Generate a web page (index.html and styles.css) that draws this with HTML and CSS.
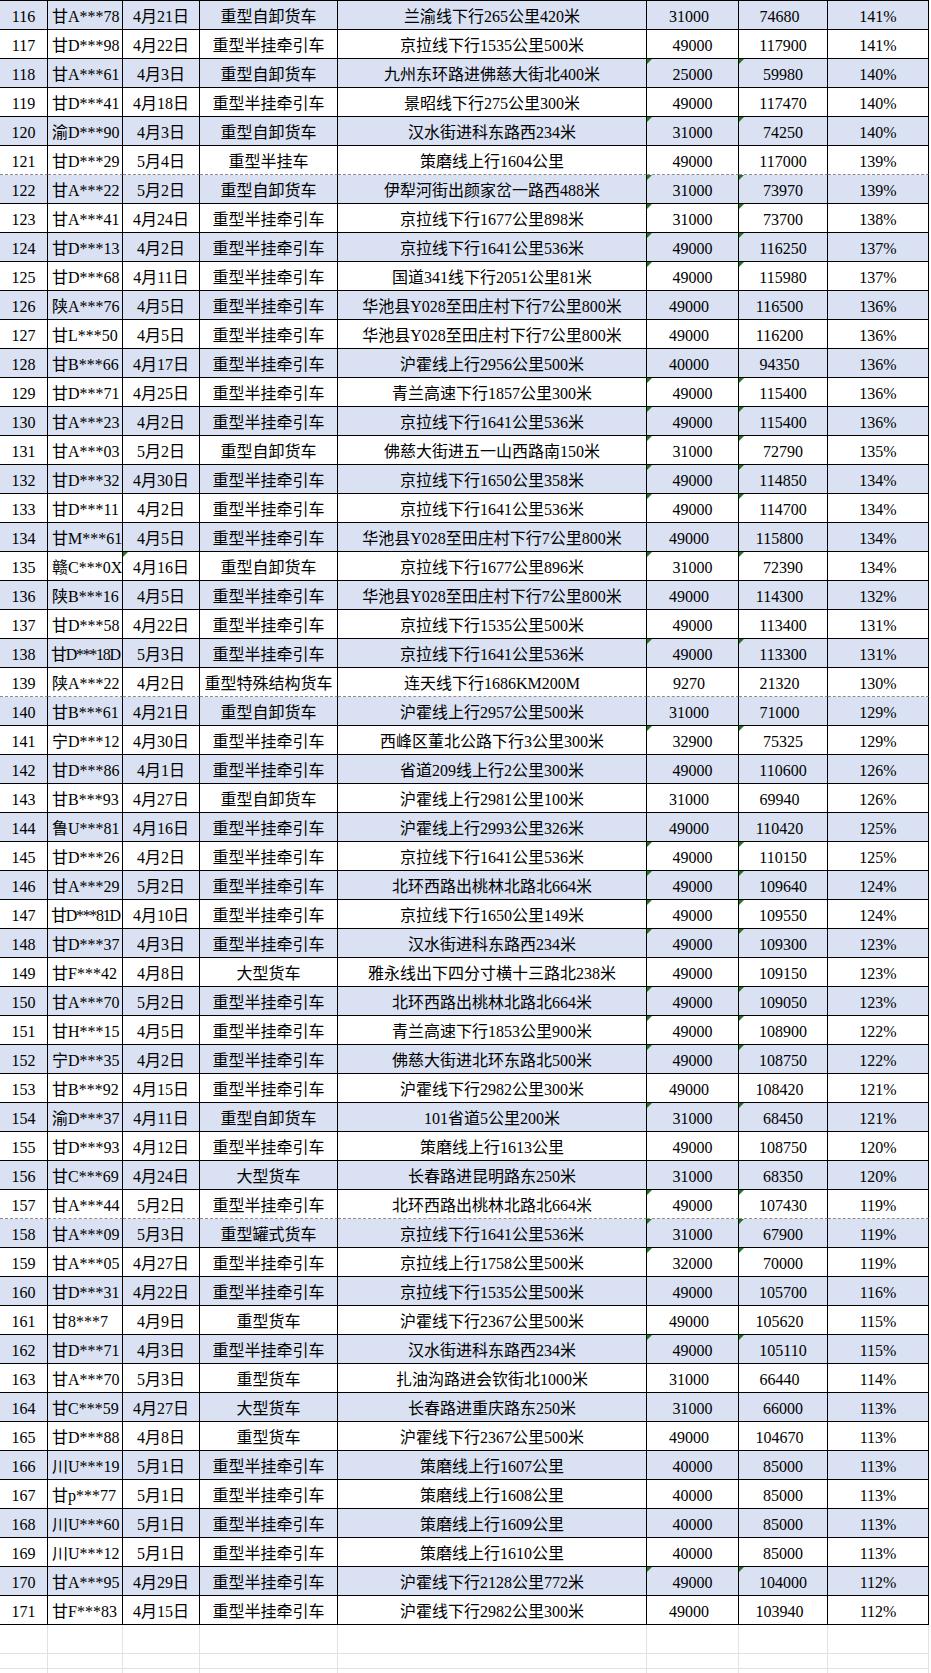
FILE: index.html
```html
<!DOCTYPE html>
<html lang="zh-CN">
<head>
<meta charset="utf-8">
<title>超限车辆明细</title>
<link rel="stylesheet" href="styles.css">
</head>
<body>
<div class="sheet">
  <div class="row k"><div class="c n">116</div><div class="c p">甘A***78</div><div class="c d">4月21日</div><div class="c t">重型自卸货车</div><div class="c l">兰渝线下行265公里420米</div><div class="c v">31000</div><div class="c w">74680</div><div class="c r">141%</div></div>
  <div class="row"><div class="c n">117</div><div class="c p">甘D***98</div><div class="c d">4月22日</div><div class="c t">重型半挂牵引车</div><div class="c l">京拉线下行1535公里500米</div><div class="c v">49000</div><div class="c w">117900</div><div class="c r">141%</div></div>
  <div class="row g"><div class="c n">118</div><div class="c p">甘A***61</div><div class="c d">4月3日</div><div class="c t">重型自卸货车</div><div class="c l">九州东环路进佛慈大街北400米</div><div class="c v">25000</div><div class="c w">59980</div><div class="c r">140%</div></div>
  <div class="row"><div class="c n">119</div><div class="c p">甘D***41</div><div class="c d">4月18日</div><div class="c t">重型半挂牵引车</div><div class="c l">景昭线下行275公里300米</div><div class="c v">49000</div><div class="c w">117470</div><div class="c r">140%</div></div>
  <div class="row g"><div class="c n">120</div><div class="c p">渝D***90</div><div class="c d">4月3日</div><div class="c t">重型自卸货车</div><div class="c l">汉水街进科东路西234米</div><div class="c v">31000</div><div class="c w">74250</div><div class="c r">140%</div></div>
  <div class="row pb"><div class="c n">121</div><div class="c p">甘D***29</div><div class="c d">5月4日</div><div class="c t">重型半挂车</div><div class="c l">策磨线上行1604公里</div><div class="c v">49000</div><div class="c w">117000</div><div class="c r">139%</div></div>
  <div class="row g"><div class="c n">122</div><div class="c p">甘A***22</div><div class="c d">5月2日</div><div class="c t">重型自卸货车</div><div class="c l">伊犁河街出颜家岔一路西488米</div><div class="c v">31000</div><div class="c w">73970</div><div class="c r">139%</div></div>
  <div class="row g"><div class="c n">123</div><div class="c p">甘A***41</div><div class="c d">4月24日</div><div class="c t">重型半挂牵引车</div><div class="c l">京拉线下行1677公里898米</div><div class="c v">31000</div><div class="c w">73700</div><div class="c r">138%</div></div>
  <div class="row g"><div class="c n">124</div><div class="c p">甘D***13</div><div class="c d">4月2日</div><div class="c t">重型半挂牵引车</div><div class="c l">京拉线下行1641公里536米</div><div class="c v">49000</div><div class="c w">116250</div><div class="c r">137%</div></div>
  <div class="row g"><div class="c n">125</div><div class="c p">甘D***68</div><div class="c d">4月11日</div><div class="c t">重型半挂牵引车</div><div class="c l">国道341线下行2051公里81米</div><div class="c v">49000</div><div class="c w">115980</div><div class="c r">137%</div></div>
  <div class="row k"><div class="c n">126</div><div class="c p">陕A***76</div><div class="c d">4月5日</div><div class="c t">重型半挂牵引车</div><div class="c l">华池县Y028至田庄村下行7公里800米</div><div class="c v">49000</div><div class="c w">116500</div><div class="c r">136%</div></div>
  <div class="row k"><div class="c n">127</div><div class="c p">甘L***50</div><div class="c d">4月5日</div><div class="c t">重型半挂牵引车</div><div class="c l">华池县Y028至田庄村下行7公里800米</div><div class="c v">49000</div><div class="c w">116200</div><div class="c r">136%</div></div>
  <div class="row k"><div class="c n">128</div><div class="c p">甘B***66</div><div class="c d">4月17日</div><div class="c t">重型半挂牵引车</div><div class="c l">沪霍线上行2956公里500米</div><div class="c v">40000</div><div class="c w">94350</div><div class="c r">136%</div></div>
  <div class="row g"><div class="c n">129</div><div class="c p">甘D***71</div><div class="c d">4月25日</div><div class="c t">重型半挂牵引车</div><div class="c l">青兰高速下行1857公里300米</div><div class="c v">49000</div><div class="c w">115400</div><div class="c r">136%</div></div>
  <div class="row g"><div class="c n">130</div><div class="c p">甘A***23</div><div class="c d">4月2日</div><div class="c t">重型半挂牵引车</div><div class="c l">京拉线下行1641公里536米</div><div class="c v">49000</div><div class="c w">115400</div><div class="c r">136%</div></div>
  <div class="row g"><div class="c n">131</div><div class="c p">甘A***03</div><div class="c d">5月2日</div><div class="c t">重型自卸货车</div><div class="c l">佛慈大街进五一山西路南150米</div><div class="c v">31000</div><div class="c w">72790</div><div class="c r">135%</div></div>
  <div class="row g"><div class="c n">132</div><div class="c p">甘D***32</div><div class="c d">4月30日</div><div class="c t">重型半挂牵引车</div><div class="c l">京拉线下行1650公里358米</div><div class="c v">49000</div><div class="c w">114850</div><div class="c r">134%</div></div>
  <div class="row g"><div class="c n">133</div><div class="c p">甘D***11</div><div class="c d">4月2日</div><div class="c t">重型半挂牵引车</div><div class="c l">京拉线下行1641公里536米</div><div class="c v">49000</div><div class="c w">114700</div><div class="c r">134%</div></div>
  <div class="row k"><div class="c n">134</div><div class="c p">甘M***61</div><div class="c d">4月5日</div><div class="c t">重型半挂牵引车</div><div class="c l">华池县Y028至田庄村下行7公里800米</div><div class="c v">49000</div><div class="c w">115800</div><div class="c r">134%</div></div>
  <div class="row g"><div class="c n">135</div><div class="c p">赣C***0X</div><div class="c d gd">4月16日</div><div class="c t">重型自卸货车</div><div class="c l">京拉线下行1677公里896米</div><div class="c v">31000</div><div class="c w">72390</div><div class="c r">134%</div></div>
  <div class="row k"><div class="c n">136</div><div class="c p">陕B***16</div><div class="c d">4月5日</div><div class="c t">重型半挂牵引车</div><div class="c l">华池县Y028至田庄村下行7公里800米</div><div class="c v">49000</div><div class="c w">114300</div><div class="c r">132%</div></div>
  <div class="row"><div class="c n">137</div><div class="c p">甘D***58</div><div class="c d">4月22日</div><div class="c t">重型半挂牵引车</div><div class="c l">京拉线下行1535公里500米</div><div class="c v">49000</div><div class="c w">113400</div><div class="c r">131%</div></div>
  <div class="row g"><div class="c n">138</div><div class="c p tight">甘D***18D</div><div class="c d">5月3日</div><div class="c t">重型半挂牵引车</div><div class="c l">京拉线下行1641公里536米</div><div class="c v">49000</div><div class="c w">113300</div><div class="c r">131%</div></div>
  <div class="row k pb"><div class="c n">139</div><div class="c p">陕A***22</div><div class="c d">4月2日</div><div class="c t">重型特殊结构货车</div><div class="c l">连天线下行1686KM200M</div><div class="c v">9270</div><div class="c w">21320</div><div class="c r">130%</div></div>
  <div class="row k"><div class="c n">140</div><div class="c p">甘B***61</div><div class="c d">4月21日</div><div class="c t">重型自卸货车</div><div class="c l">沪霍线上行2957公里500米</div><div class="c v">31000</div><div class="c w">71000</div><div class="c r">129%</div></div>
  <div class="row g"><div class="c n">141</div><div class="c p">宁D***12</div><div class="c d">4月30日</div><div class="c t">重型半挂牵引车</div><div class="c l">西峰区董北公路下行3公里300米</div><div class="c v">32900</div><div class="c w">75325</div><div class="c r">129%</div></div>
  <div class="row"><div class="c n">142</div><div class="c p">甘D***86</div><div class="c d">4月1日</div><div class="c t">重型半挂牵引车</div><div class="c l">省道209线上行2公里300米</div><div class="c v">49000</div><div class="c w">110600</div><div class="c r">126%</div></div>
  <div class="row k"><div class="c n">143</div><div class="c p">甘B***93</div><div class="c d">4月27日</div><div class="c t">重型自卸货车</div><div class="c l">沪霍线上行2981公里100米</div><div class="c v">31000</div><div class="c w">69940</div><div class="c r">126%</div></div>
  <div class="row k"><div class="c n">144</div><div class="c p">鲁U***81</div><div class="c d">4月16日</div><div class="c t">重型半挂牵引车</div><div class="c l">沪霍线上行2993公里326米</div><div class="c v">49000</div><div class="c w">110420</div><div class="c r">125%</div></div>
  <div class="row g"><div class="c n">145</div><div class="c p">甘D***26</div><div class="c d">4月2日</div><div class="c t">重型半挂牵引车</div><div class="c l">京拉线下行1641公里536米</div><div class="c v">49000</div><div class="c w">110150</div><div class="c r">125%</div></div>
  <div class="row g"><div class="c n">146</div><div class="c p">甘A***29</div><div class="c d">5月2日</div><div class="c t">重型半挂牵引车</div><div class="c l">北环西路出桃林北路北664米</div><div class="c v">49000</div><div class="c w">109640</div><div class="c r">124%</div></div>
  <div class="row g"><div class="c n">147</div><div class="c p tight">甘D***81D</div><div class="c d">4月10日</div><div class="c t">重型半挂牵引车</div><div class="c l">京拉线下行1650公里149米</div><div class="c v">49000</div><div class="c w">109550</div><div class="c r">124%</div></div>
  <div class="row g"><div class="c n">148</div><div class="c p">甘D***37</div><div class="c d">4月3日</div><div class="c t">重型半挂牵引车</div><div class="c l">汉水街进科东路西234米</div><div class="c v">49000</div><div class="c w">109300</div><div class="c r">123%</div></div>
  <div class="row"><div class="c n">149</div><div class="c p">甘F***42</div><div class="c d">4月8日</div><div class="c t">大型货车</div><div class="c l">雅永线出下四分寸横十三路北238米</div><div class="c v">49000</div><div class="c w">109150</div><div class="c r">123%</div></div>
  <div class="row g"><div class="c n">150</div><div class="c p">甘A***70</div><div class="c d">5月2日</div><div class="c t">重型半挂牵引车</div><div class="c l">北环西路出桃林北路北664米</div><div class="c v">49000</div><div class="c w">109050</div><div class="c r">123%</div></div>
  <div class="row g"><div class="c n">151</div><div class="c p">甘H***15</div><div class="c d">4月5日</div><div class="c t">重型半挂牵引车</div><div class="c l">青兰高速下行1853公里900米</div><div class="c v">49000</div><div class="c w">108900</div><div class="c r">122%</div></div>
  <div class="row g"><div class="c n">152</div><div class="c p">宁D***35</div><div class="c d">4月2日</div><div class="c t">重型半挂牵引车</div><div class="c l">佛慈大街进北环东路北500米</div><div class="c v">49000</div><div class="c w">108750</div><div class="c r">122%</div></div>
  <div class="row k"><div class="c n">153</div><div class="c p">甘B***92</div><div class="c d">4月15日</div><div class="c t">重型半挂牵引车</div><div class="c l">沪霍线下行2982公里300米</div><div class="c v">49000</div><div class="c w">108420</div><div class="c r">121%</div></div>
  <div class="row g"><div class="c n">154</div><div class="c p">渝D***37</div><div class="c d">4月11日</div><div class="c t">重型自卸货车</div><div class="c l">101省道5公里200米</div><div class="c v">31000</div><div class="c w">68450</div><div class="c r">121%</div></div>
  <div class="row"><div class="c n">155</div><div class="c p">甘D***93</div><div class="c d">4月12日</div><div class="c t">重型半挂牵引车</div><div class="c l">策磨线上行1613公里</div><div class="c v">49000</div><div class="c w">108750</div><div class="c r">120%</div></div>
  <div class="row"><div class="c n">156</div><div class="c p">甘C***69</div><div class="c d">4月24日</div><div class="c t">大型货车</div><div class="c l">长春路进昆明路东250米</div><div class="c v">31000</div><div class="c w">68350</div><div class="c r">120%</div></div>
  <div class="row g pb"><div class="c n">157</div><div class="c p">甘A***44</div><div class="c d">5月2日</div><div class="c t">重型半挂牵引车</div><div class="c l">北环西路出桃林北路北664米</div><div class="c v">49000</div><div class="c w">107430</div><div class="c r">119%</div></div>
  <div class="row g"><div class="c n">158</div><div class="c p">甘A***09</div><div class="c d">5月3日</div><div class="c t">重型罐式货车</div><div class="c l">京拉线下行1641公里536米</div><div class="c v">31000</div><div class="c w">67900</div><div class="c r">119%</div></div>
  <div class="row g"><div class="c n">159</div><div class="c p">甘A***05</div><div class="c d">4月27日</div><div class="c t">重型半挂牵引车</div><div class="c l">京拉线上行1758公里500米</div><div class="c v">32000</div><div class="c w">70000</div><div class="c r">119%</div></div>
  <div class="row"><div class="c n">160</div><div class="c p">甘D***31</div><div class="c d">4月22日</div><div class="c t">重型半挂牵引车</div><div class="c l">京拉线下行1535公里500米</div><div class="c v">49000</div><div class="c w">105700</div><div class="c r">116%</div></div>
  <div class="row k"><div class="c n">161</div><div class="c p">甘8***7</div><div class="c d">4月9日</div><div class="c t">重型货车</div><div class="c l">沪霍线下行2367公里500米</div><div class="c v">49000</div><div class="c w">105620</div><div class="c r">115%</div></div>
  <div class="row g"><div class="c n">162</div><div class="c p">甘D***71</div><div class="c d">4月3日</div><div class="c t">重型半挂牵引车</div><div class="c l">汉水街进科东路西234米</div><div class="c v">49000</div><div class="c w">105110</div><div class="c r">115%</div></div>
  <div class="row k"><div class="c n">163</div><div class="c p">甘A***70</div><div class="c d">5月3日</div><div class="c t">重型货车</div><div class="c l">扎油沟路进会钦街北1000米</div><div class="c v">31000</div><div class="c w">66440</div><div class="c r">114%</div></div>
  <div class="row"><div class="c n">164</div><div class="c p">甘C***59</div><div class="c d">4月27日</div><div class="c t">大型货车</div><div class="c l">长春路进重庆路东250米</div><div class="c v">31000</div><div class="c w">66000</div><div class="c r">113%</div></div>
  <div class="row k"><div class="c n">165</div><div class="c p">甘D***88</div><div class="c d">4月8日</div><div class="c t">重型货车</div><div class="c l">沪霍线下行2367公里500米</div><div class="c v">49000</div><div class="c w">104670</div><div class="c r">113%</div></div>
  <div class="row"><div class="c n">166</div><div class="c p">川U***19</div><div class="c d">5月1日</div><div class="c t">重型半挂牵引车</div><div class="c l">策磨线上行1607公里</div><div class="c v">40000</div><div class="c w">85000</div><div class="c r">113%</div></div>
  <div class="row"><div class="c n">167</div><div class="c p">甘p***77</div><div class="c d">5月1日</div><div class="c t">重型半挂牵引车</div><div class="c l">策磨线上行1608公里</div><div class="c v">40000</div><div class="c w">85000</div><div class="c r">113%</div></div>
  <div class="row"><div class="c n">168</div><div class="c p">川U***60</div><div class="c d">5月1日</div><div class="c t">重型半挂牵引车</div><div class="c l">策磨线上行1609公里</div><div class="c v">40000</div><div class="c w">85000</div><div class="c r">113%</div></div>
  <div class="row"><div class="c n">169</div><div class="c p">川U***12</div><div class="c d">5月1日</div><div class="c t">重型半挂牵引车</div><div class="c l">策磨线上行1610公里</div><div class="c v">40000</div><div class="c w">85000</div><div class="c r">113%</div></div>
  <div class="row g"><div class="c n">170</div><div class="c p">甘A***95</div><div class="c d">4月29日</div><div class="c t">重型半挂牵引车</div><div class="c l">沪霍线下行2128公里772米</div><div class="c v">49000</div><div class="c w">104000</div><div class="c r">112%</div></div>
  <div class="row k"><div class="c n">171</div><div class="c p">甘F***83</div><div class="c d">4月15日</div><div class="c t">重型半挂牵引车</div><div class="c l">沪霍线下行2982公里300米</div><div class="c v">49000</div><div class="c w">103940</div><div class="c r">112%</div></div>
</div>
<div class="blank">
  <div class="brow"><div class="e"></div><div class="e"></div><div class="e"></div><div class="e"></div><div class="e"></div><div class="e"></div><div class="e"></div><div class="e"></div></div>
  <div class="brow short"><div class="e"></div><div class="e"></div><div class="e"></div><div class="e"></div><div class="e"></div><div class="e"></div><div class="e"></div><div class="e"></div></div>
  <div class="brow tail"><div class="e"></div><div class="e"></div><div class="e"></div><div class="e"></div><div class="e"></div><div class="e"></div><div class="e"></div><div class="e"></div></div>
</div>
</body>
</html>
```

FILE: styles.css
```css
html, body {
  margin: 0;
  padding: 0;
  background: #ffffff;
}

body {
  width: 931px;
  overflow: hidden;
  font-family: "Liberation Serif", "Noto Sans CJK SC", serif;
  font-size: 16px;
  color: #000000;
}

.sheet {
  width: 929px;
  border-top: 1px solid #000000;
}

.row,
.brow {
  display: grid;
  grid-template-columns: 48px 75px 77px 138px 309px 92px 89px 101px;
  height: 29px;
}

.row:nth-child(odd) {
  background: #d9e1f2;
}

.c {
  position: relative;
  box-sizing: border-box;
  height: 29px;
  padding-top: 3px;
  line-height: 25px;
  border-right: 1px solid #000000;
  border-bottom: 1px solid #000000;
  text-align: center;
  white-space: nowrap;
  overflow: hidden;
}

.p {
  text-align: left;
  padding-left: 4px;
}

.p.tight {
  padding-left: 3px;
  letter-spacing: -1.3px;
}

.t,
.l {
  overflow: visible;
}

.row.k .v,
.row.k .w {
  padding-right: 7px;
}

.row.pb .c {
  border-bottom: 1px dashed #8c8c8c;
}

.row.g .v::before,
.row.g .w::before,
.gd::before {
  content: "";
  position: absolute;
  top: 0;
  left: 0;
  width: 0;
  height: 0;
  border-top: 5px solid #1f7a1f;
  border-right: 5px solid transparent;
}

.blank {
  width: 929px;
}

.e {
  box-sizing: border-box;
  border-right: 1px solid #e2e2e2;
  border-bottom: 1px solid #e2e2e2;
}

.brow.short {
  height: 15px;
}

.brow.tail {
  height: 20px;
}
```
